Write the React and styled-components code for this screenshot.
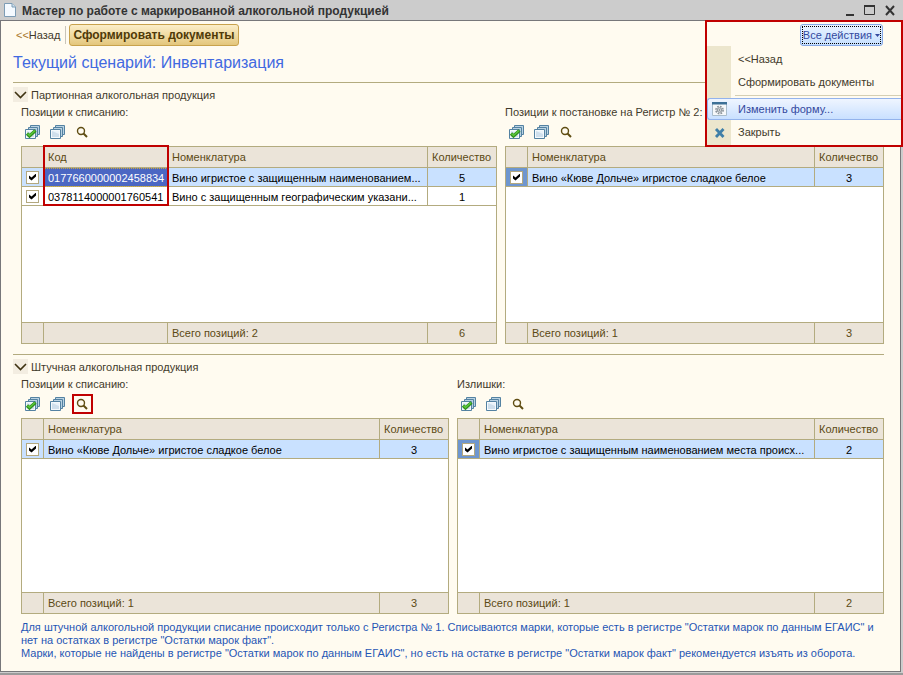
import React from 'react';
import styled, { createGlobalStyle, css } from 'styled-components';

const GlobalStyle = createGlobalStyle`
  * {
    box-sizing: border-box;
  }
  body {
    margin: 0;
    background: #cccccc;
    color: #3f3a2b;
    font-family: "Liberation Sans", Arial, sans-serif;
    font-size: 11px;
    line-height: 13px;
  }
  button {
    font: inherit;
    color: inherit;
    cursor: pointer;
  }
`;

const Page = styled.div`
  position: relative;
  padding-bottom: 1px;
  border-bottom: 2px solid #9b9b9b;
`;

const TitleBar = styled.header`
  display: flex;
  align-items: center;
  gap: 6px;
  height: 20px;
  padding: 0 6px 0 4px;
`;

const WindowTitle = styled.h1`
  flex: 1;
  margin: 0;
  padding-top: 2px;
  font-size: 12px;
  font-weight: bold;
  color: #333333;
`;

const WindowButton = styled.button`
  display: flex;
  width: 14px;
  height: 14px;
  padding: 0;
  border: 0;
  background: none;
`;

const WindowBody = styled.main`
  margin-right: 2px;
  padding: 3px 16px 11px 12px;
  border: 1px solid #77777a;
  background: #fffbf0;
`;

const Toolbar = styled.div`
  display: flex;
  align-items: center;
  height: 22px;
`;

const LinkButton = styled.button`
  padding: 0 5px 0 3px;
  border: 0;
  background: none;
  span {
    color: #a8772b;
  }
`;

const Divider = styled.span`
  width: 1px;
  height: 18px;
  margin-right: 3px;
  background: #c9c4b8;
`;

const PrimaryButton = styled.button`
  height: 22px;
  padding: 0 3px;
  border: 1px solid #c8a24c;
  border-radius: 3px;
  background: linear-gradient(#fbeec9, #f0dba3 50%, #e3c67c);
  color: #4f3a08;
  font-weight: bold;
  font-size: 12px;
`;

const Heading = styled.h2`
  margin: 6px 0 9px;
  color: #4169e1;
  font-size: 16px;
  font-weight: normal;
  line-height: 21px;
`;

const Group = styled.section`
  margin-bottom: 10px;
  border-top: 1px solid #b3ab7f;
`;

const GroupTitle = styled.h3`
  margin: 0;
  font-size: 11px;
  font-weight: normal;
  button {
    display: flex;
    align-items: center;
    gap: 3px;
    margin-top: 4px;
    padding: 0;
    border: 0;
    background: none;
  }
  span {
    padding-top: 2px;
  }
  svg {
    background: #f3ede1;
  }
`;

const Columns = styled.div`
  display: grid;
  grid-template-columns: ${({ $template }) => $template};
  gap: 8px;
  padding-left: 8px;
`;

const Caption = styled.div`
  margin-top: 4px;
  height: 13px;
  white-space: nowrap;
`;

const Commands = styled.div`
  display: flex;
  align-items: center;
  gap: 9px;
  height: 27px;
  padding: 0 0 2px 4px;
`;

const IconButton = styled.button`
  position: relative;
  display: flex;
  padding: 0;
  border: 0;
  background: none;
  ${({ $marked }) => $marked && css`
    &::after {
      content: "";
      position: absolute;
      inset: -2px -2px -2px -3px;
      border: 2px solid #c00000;
    }
  `}
`;

const TableFrame = styled.div`
  position: relative;
  border: 1px solid #b3ab7f;
  background: #ffffff;
`;

const Grid = styled.table`
  width: 100%;
  height: ${({ $height }) => $height}px;
  table-layout: fixed;
  border-spacing: 0;
  color: #000000;
  th, td {
    padding: 0 2px 0 4px;
    overflow: hidden;
    text-overflow: ellipsis;
    white-space: nowrap;
    text-align: left;
    font-weight: normal;
    border-right: 1px solid #b3ab7f;
  }
  th:last-child, td:last-child {
    border-right: 0;
  }
  td:last-child {
    padding-right: 4px;
    text-align: center;
  }
  th, tfoot td {
    height: 21px;
    background: #ebe4d9;
    color: #5b4a14;
  }
  th {
    border-bottom: 1px solid #b3ab7f;
  }
  tfoot td {
    border-top: 1px solid #b3ab7f;
  }
`;

const Row = styled.tr`
  background: ${({ $active }) => ($active ? '#c9e1ff' : '#ffffff')};
  td {
    height: 19px;
    padding-top: 2px;
    border-bottom: 1px solid #b3ab7f;
  }
  td:first-child {
    padding: 0 0 0 4px;
    background: ${({ $focus }) => ($focus ? '#6e96cf' : 'transparent')};
  }
`;

const CodeCell = styled.td`
  ${({ $selected }) => $selected && css`
    background: #4b67c3;
    color: #ffffff;
    outline: 1px dotted #c9a640;
    outline-offset: -1px;
  `}
`;

const Check = styled.input`
  appearance: none;
  display: block;
  width: 13px;
  height: 13px;
  margin: 0;
  border: 1px solid #b3a87f;
  background: #ffffff;
  &:checked::before {
    content: "";
    display: block;
    width: 7px;
    height: 7px;
    margin: 2px;
    background: #000000;
    clip-path: polygon(0 29%, 36% 58%, 100% 0, 100% 42%, 36% 100%, 0 71%);
  }
`;

const CodeMark = styled.div`
  position: absolute;
  top: -2px;
  left: 21px;
  width: 126px;
  height: 61px;
  border: 2px solid #c00000;
`;

const Notes = styled.p`
  margin: -3px 0 0;
  padding-left: 8px;
  color: #1f56b5;
`;

const Actions = styled.div`
  position: absolute;
  top: 20px;
  right: 0;
  width: 198px;
  border: 2px solid #c00000;
  background: #fffbf0;
`;

const ActionsButton = styled.button`
  display: flex;
  align-items: center;
  height: 22px;
  margin: 2px 18px 0 auto;
  padding: 1px;
  border: 1px solid #86a9e8;
  border-radius: 3px;
  background: linear-gradient(#eaf3ff, #c5dfff);
  color: #33499e;
  span {
    display: flex;
    align-items: center;
    gap: 3px;
    height: 18px;
    border: 1px dotted #000000;
  }
`;

const Menu = styled.ul`
  margin: 0;
  padding: 2px 0 1px;
  list-style: none;
  background: linear-gradient(90deg, #ece6cd 24px, transparent 24px);
`;

const MenuItem = styled.button`
  display: grid;
  grid-template-columns: 24px 1fr;
  align-items: center;
  gap: 7px;
  width: 100%;
  height: 23px;
  padding: 0;
  border: 0;
  background: none;
  text-align: left;
  svg {
    margin-left: 5px;
  }
  ${({ $active }) => $active && css`
    height: 22px;
    margin-bottom: 1px;
    border: 1px solid #93b3ec;
    border-right: 0;
    border-radius: 3px 0 0 3px;
    background: linear-gradient(#eff5ff, #c9e0ff);
    color: #33499e;
    grid-template-columns: 23px 1fr;
    svg {
      margin-left: 4px;
    }
  `}
`;

const MenuLine = styled.li`
  height: 1px;
  margin: 1px 0 2px 28px;
  background: #d5cfb4;
`;

const PageIcon = () => (
  <svg width="12" height="14" viewBox="0 0 12 14">
    <path d="M.5.5h7.5l3.500 3.500v9.500H.5z" fill="#f5faff" stroke="#7d9cb5" />
    <path d="M8 .5V4h3.500" fill="#cfe0ee" stroke="#7d9cb5" />
  </svg>
);

const ChevronIcon = () => (
  <svg width="15" height="15" viewBox="0 0 15 15">
    <path d="M2 5l5.500 5.500L13 5" fill="none" stroke="#3f3312" strokeWidth="1.600" />
  </svg>
);

const StackIcon = ({ checked }) => (
  <svg width="16" height="16" viewBox="0 0 16 16">
    <path d="M5.500 1.500h9v9h-9z" fill="#b9d2e2" stroke="#5482a2" />
    <path d="M3.500 3.500h9v9h-9z" fill="#b9d2e2" stroke="#5482a2" />
    <path d="M.5 5.500h10v9H.5z" fill="#f4f9fc" stroke="#5482a2" />
    <path d="M2 7h7v6H2z" fill="#cfdfec" />
    <path d="M2 7h7v3z" fill="#eaf3fa" />
    {checked && (
      <path d="M2 9.500l2.500 2.500 6-5.500" fill="none" stroke="#2f8f1c" strokeWidth="3.200" />
    )}
    {checked && (
      <path d="M2.500 9.500l2 2 5.500-5" fill="none" stroke="#5cc83a" strokeWidth="1.400" />
    )}
  </svg>
);

const SearchIcon = () => (
  <svg width="16" height="16" viewBox="0 0 16 16">
    <circle cx="6" cy="7" r="3.500" fill="none" stroke="#5f4d12" strokeWidth="1.400" />
    <path d="M8.500 9.500l3.500 3.500" stroke="#5f4d12" strokeWidth="2" />
  </svg>
);

const FormIcon = () => (
  <svg width="15" height="14" viewBox="0 0 15 14">
    <path d="M.5.5h14v13H.5z" fill="#f6f8fa" stroke="#a9bccb" />
    <path d="M0 0h15v2.500H0z" fill="#3c7097" />
    <circle cx="7.500" cy="8" r="3.600" fill="none" stroke="#8b9299" strokeWidth="1.600" strokeDasharray="1.700 1.130" />
    <circle cx="7.500" cy="8" r="2.300" fill="#d5d9dd" stroke="#8b9299" />
    <circle cx="7.500" cy="8" r=".8" fill="#70777d" />
  </svg>
);

const CrossIcon = () => (
  <svg width="15" height="12" viewBox="0 0 15 12">
    <path d="M4 2l7.500 8M11.500 2L4 10" stroke="#3f7fa8" strokeWidth="2.800" />
  </svg>
);

const ArrowIcon = () => (
  <svg width="5" height="3" viewBox="0 0 5 3">
    <path d="M0 0h5L2.500 3z" fill="#33499e" />
  </svg>
);

const ProductTable = ({ title, rows, total, height, withCode, focus, markSearch }) => (
  <div>
    <Caption>{title}</Caption>
    <Commands>
      <IconButton aria-label="Отметить все"><StackIcon checked /></IconButton>
      <IconButton aria-label="Снять отметки"><StackIcon /></IconButton>
      <IconButton aria-label="Найти" $marked={markSearch}><SearchIcon /></IconButton>
    </Commands>
    <TableFrame>
      <Grid $height={height}>
        <colgroup>
          <col style={{ width: 22 }} />
          {withCode && <col style={{ width: 124 }} />}
          <col />
          <col style={{ width: 68 }} />
        </colgroup>
        <thead>
          <tr>
            <th />
            {withCode && <th>Код</th>}
            <th>Номенклатура</th>
            <th>Количество</th>
          </tr>
        </thead>
        <tbody>
          {rows.map((row, i) => (
            <Row key={row.name} $active={i === 0} $focus={focus && i === 0}>
              <td><Check type="checkbox" defaultChecked aria-label={row.name} /></td>
              {withCode && <CodeCell $selected={i === 0}>{row.code}</CodeCell>}
              <td>{row.name}</td>
              <td>{row.count}</td>
            </Row>
          ))}
          <tr>
            <td colSpan={withCode ? 4 : 3} />
          </tr>
        </tbody>
        <tfoot>
          <tr>
            <td />
            {withCode && <td />}
            <td>Всего позиций: {rows.length}</td>
            <td>{total}</td>
          </tr>
        </tfoot>
      </Grid>
      {withCode && <CodeMark />}
    </TableFrame>
  </div>
);

const batchRows = [
  {
    code: '0177660000002458834',
    name: 'Вино игристое с защищенным наименованием...',
    count: 5,
  },
  {
    code: '0378114000001760541',
    name: 'Вино с защищенным географическим указани...',
    count: 1,
  },
];

const sweetRows = [{ name: 'Вино «Кюве Дольче» игристое сладкое белое', count: 3 }];

const surplusRows = [
  { name: 'Вино игристое с защищенным наименованием места происх...', count: 2 },
];

const App = () => {
  return (
    <>
      <GlobalStyle />
      <Page>
        <TitleBar>
          <PageIcon />
          <WindowTitle>Мастер по работе с маркированной алкогольной продукцией</WindowTitle>
          <WindowButton aria-label="Свернуть">
            <svg width="14" height="14"><path d="M3 12h8" stroke="#333" strokeWidth="2" /></svg>
          </WindowButton>
          <WindowButton aria-label="Развернуть">
            <svg width="14" height="14"><path d="M1.500 2.500h10v9h-10z" fill="none" stroke="#333" /><path d="M1 3h11" stroke="#333" strokeWidth="2" /></svg>
          </WindowButton>
          <WindowButton aria-label="Закрыть">
            <svg width="14" height="14"><path d="M3 3l8 9M11 3l-8 9" stroke="#333" strokeWidth="2" /></svg>
          </WindowButton>
        </TitleBar>

        <WindowBody>
          <Toolbar>
            <LinkButton><span>&lt;&lt;</span>Назад</LinkButton>
            <Divider />
            <PrimaryButton>Сформировать документы</PrimaryButton>
          </Toolbar>

          <Heading>Текущий сценарий: Инвентаризация</Heading>

          <Group>
            <GroupTitle>
              <button><ChevronIcon /><span>Партионная алкогольная продукция</span></button>
            </GroupTitle>
            <Columns $template="minmax(0, 476fr) minmax(0, 379fr)">
              <ProductTable title="Позиции к списанию:" rows={batchRows} total={6} height={196} withCode />
              <ProductTable title="Позиции к постановке на Регистр № 2:" rows={sweetRows} total={3} height={196} focus />
            </Columns>
          </Group>

          <Group>
            <GroupTitle>
              <button><ChevronIcon /><span>Штучная алкогольная продукция</span></button>
            </GroupTitle>
            <Columns $template="minmax(0, 428fr) minmax(0, 427fr)">
              <ProductTable title="Позиции к списанию:" rows={sweetRows} total={3} height={194} markSearch />
              <ProductTable title="Излишки:" rows={surplusRows} total={2} height={194} focus />
            </Columns>
          </Group>

          <Notes>
            Для штучной алкогольной продукции списание происходит только с Регистра № 1. Списываются марки, которые есть в регистре "Остатки марок по данным ЕГАИС" и нет на остатках в регистре "Остатки марок факт".
            <br />
            Марки, которые не найдены в регистре "Остатки марок по данным ЕГАИС", но есть на остатке в регистре "Остатки марок факт" рекомендуется изъять из оборота.
          </Notes>
        </WindowBody>

        <Actions>
          <ActionsButton><span>Все действия<ArrowIcon /></span></ActionsButton>
          <Menu>
            <li><MenuItem><i />&lt;&lt;Назад</MenuItem></li>
            <li><MenuItem><i />Сформировать документы</MenuItem></li>
            <MenuLine />
            <li><MenuItem $active><FormIcon />Изменить форму...</MenuItem></li>
            <li><MenuItem><CrossIcon />Закрыть</MenuItem></li>
          </Menu>
        </Actions>
      </Page>
    </>
  );
};

export default App;
